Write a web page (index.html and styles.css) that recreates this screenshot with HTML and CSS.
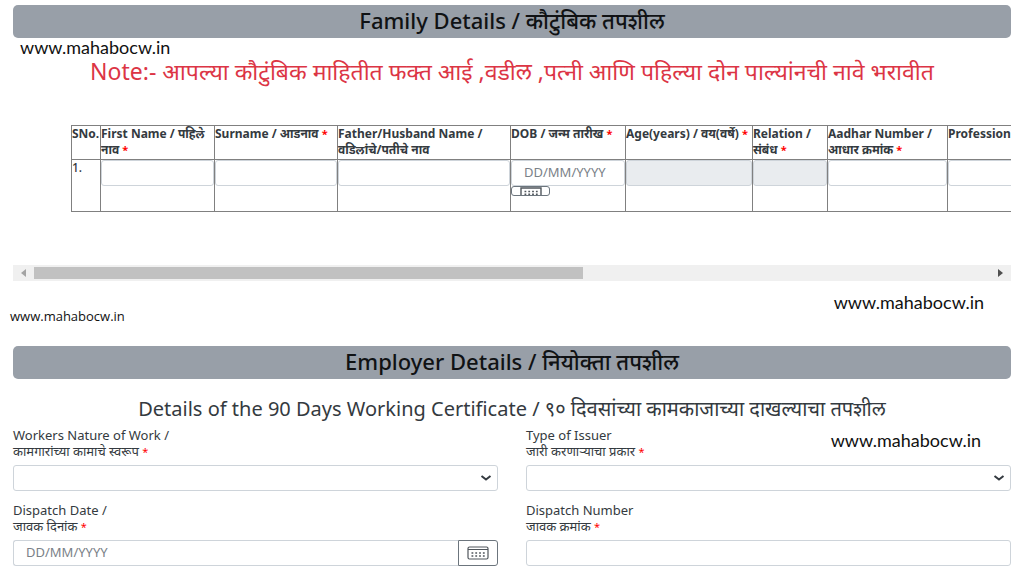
FILE: index.html
```html
<!DOCTYPE html>
<html lang="mr">
<head>
<meta charset="utf-8">
<title>Family and Employer Details</title>
<link rel="stylesheet" href="styles.css">
</head>
<body>
<svg class="defs" aria-hidden="true">
  <symbol id="calendar" viewBox="0 0 22 14">
    <rect x="1" y="1" width="20" height="12" rx="1.5" fill="none" stroke="#50565c" stroke-width="1.2"/>
    <path d="M1 3.5h20" stroke="#50565c" stroke-width="1"/>
    <path d="M4.500 7h13.500M4.500 10h13.500" stroke="#50565c" stroke-width="1.600" stroke-dasharray="1.800 2"/>
  </symbol>
  <symbol id="calendar-cut" viewBox="0 0 22 10">
    <path d="M1 10V1h20v9" fill="none" stroke="#50565c" stroke-width="1.4"/>
    <path d="M4.500 4.500h13.500M4.500 7.200h13.500" stroke="#50565c" stroke-width="1.600" stroke-dasharray="1.800 2"/>
  </symbol>
</svg>
<main class="page">
  <section class="family">
    <h2 class="bar">Family Details / कौटुंबिक तपशील</h2>
    <p class="note">Note:- आपल्या कौटुंबिक माहितीत फक्त आई ,वडील ,पत्नी आणि पहिल्या दोन पाल्यांनची नावे भरावीत</p>
    <div class="table-wrap">
      <table class="members">
        <colgroup>
          <col class="c-no"><col class="c-first"><col class="c-sur"><col class="c-father"><col class="c-dob"><col class="c-age"><col class="c-rel"><col class="c-aadhar"><col class="c-prof">
        </colgroup>
        <thead>
          <tr>
            <th>SNo.</th>
            <th>First Name / पहिले नाव <span class="req">*</span></th>
            <th>Surname / आडनाव <span class="req">*</span></th>
            <th>Father/Husband Name / वडिलांचे/पतीचे नाव</th>
            <th>DOB / जन्म तारीख <span class="req">*</span></th>
            <th>Age(years) / वय(वर्षे) <span class="req">*</span></th>
            <th>Relation /<br>संबंध <span class="req">*</span></th>
            <th>Aadhar Number / आधार क्रमांक <span class="req">*</span></th>
            <th>Profession</th>
          </tr>
        </thead>
        <tbody>
          <tr>
            <td>1.</td>
            <td><input class="cell" aria-label="First Name"></td>
            <td><input class="cell" aria-label="Surname"></td>
            <td><input class="cell" aria-label="Father/Husband Name"></td>
            <td><input class="cell" aria-label="DOB" placeholder="DD/MM/YYYY"><button class="mini" type="button" aria-label="Choose date of birth"><svg class="mini-icon"><use href="#calendar-cut"/></svg></button></td>
            <td><input class="cell" aria-label="Age" disabled></td>
            <td><input class="cell" aria-label="Relation" disabled></td>
            <td><input class="cell" aria-label="Aadhar Number"></td>
            <td><input class="cell" aria-label="Profession"></td>
          </tr>
        </tbody>
      </table>
    </div>
    <div class="scroll">
      <button class="arrow left" type="button" aria-label="Scroll left"></button>
      <div class="track"><div class="thumb"></div></div>
      <button class="arrow right" type="button" aria-label="Scroll right"></button>
    </div>
  </section>
  <section class="employer">
    <h2 class="bar">Employer Details / नियोक्ता तपशील</h2>
    <h3 class="sub">Details of the 90 Days Working Certificate / ९० दिवसांच्या कामकाजाच्या दाखल्याचा तपशील</h3>
    <form class="fields">
      <div class="field">
        <label for="nature">Workers Nature of Work /<br>कामगारांच्या कामाचे स्वरूप <span class="req">*</span></label>
        <div class="select"><select id="nature"><option></option></select><svg class="chev" viewBox="0 0 12 8"><path d="M1.500 2l4.500 3.500L10.500 2" fill="none" stroke="#343a40" stroke-width="2"/></svg></div>
      </div>
      <div class="field">
        <label for="issuer">Type of Issuer<br>जारी करणाऱ्याचा प्रकार <span class="req">*</span></label>
        <div class="select"><select id="issuer"><option></option></select><svg class="chev" viewBox="0 0 12 8"><path d="M1.500 2l4.500 3.500L10.500 2" fill="none" stroke="#343a40" stroke-width="2"/></svg></div>
      </div>
      <div class="field">
        <label for="ddate">Dispatch Date /<br>जावक दिनांक <span class="req">*</span></label>
        <div class="group"><input id="ddate" class="box" placeholder="DD/MM/YYYY"><button class="cal" type="button" aria-label="Choose dispatch date"><svg class="cal-icon"><use href="#calendar"/></svg></button></div>
      </div>
      <div class="field">
        <label for="dnum">Dispatch Number<br>जावक क्रमांक <span class="req">*</span></label>
        <input id="dnum" class="box">
      </div>
    </form>
  </section>
  <span class="mark mark-top">www.mahabocw.in</span>
  <span class="mark mark-mid">www.mahabocw.in</span>
  <span class="mark mark-small">www.mahabocw.in</span>
  <span class="mark mark-low">www.mahabocw.in</span>
</main>
</body>
</html>
```
FILE: styles.css
```css
* { box-sizing: border-box; }
body {
  margin: 0;
  background: #fff;
  color: #343a40;
  font-family: "Noto Sans", "Open Sans", sans-serif;
  font-size: 13px;
  line-height: 16px;
}
input, button, select { font: inherit; color: inherit; margin: 0; }
.defs { position: absolute; width: 0; height: 0; }
.page { position: relative; padding: 5px 13px 0; overflow: hidden; }
.bar {
  margin: 0;
  height: 33px;
  border-radius: 5px;
  background: #989fa8;
  color: #101214;
  font-size: 22px;
  font-weight: 500;
  line-height: 30px;
  text-align: center;
}
.note {
  margin: 18px 0 0;
  color: #dc3545;
  font-size: 23px;
  line-height: 30px;
  text-align: center;
  white-space: nowrap;
}
.table-wrap { margin-top: 39px; padding-left: 58px; overflow: hidden; }
.members { table-layout: fixed; width: 1000px; border-collapse: collapse; }
.c-no { width: 29px; }
.c-first { width: 114px; }
.c-sur { width: 123px; }
.c-father { width: 173px; }
.c-dob { width: 115px; }
.c-age { width: 127px; }
.c-rel { width: 75px; }
.c-aadhar { width: 120px; }
.c-prof { width: 124px; }
.members th, .members td {
  padding: 0;
  border: 1px solid #808080;
  text-align: left;
  vertical-align: top;
}
.members th { height: 34px; font-size: 12px; font-weight: 700; }
.members td { height: 52px; font-size: 12px; font-weight: 500; }
.req { color: #f00; font-size: 11px; line-height: 1; }
.cell {
  display: block;
  width: 100%;
  height: 26px;
  padding: 0 12px 2px;
  border: 1px solid #ced4da;
  border-radius: 3px;
  background: #fff;
  font-size: 13px;
}
.cell:disabled { background: #e9ecef; }
input::placeholder { color: #7a8188; opacity: 1; font-weight: 400; }
.mini {
  display: flex;
  justify-content: center;
  width: 39px;
  height: 10px;
  padding: 0;
  border: 1px solid #6c757d;
  border-radius: 3px;
  background: #fff;
  overflow: hidden;
}
.mini-icon { flex: none; width: 22px; height: 10px; }
.scroll { display: flex; align-items: center; height: 16px; margin-top: 53px; background: #f0f0f0; }
.arrow { display: flex; align-items: center; justify-content: center; width: 21px; height: 16px; padding: 0; border: 0; background: none; }
.arrow::before { content: ""; border: 4px solid transparent; }
.left::before { border-left-width: 0; border-right: 5px solid #a3a3a3; }
.right::before { border-right-width: 0; border-left: 5px solid #505050; }
.track { flex: 1; }
.thumb { width: 57.4%; height: 12px; background: #c1c1c1; }
.employer { margin-top: 65px; }
.sub { margin: 15px 0 3px; font-size: 20px; font-weight: 400; line-height: 30px; text-align: center; white-space: nowrap; }
.fields { display: grid; grid-template-columns: 1fr 1fr; gap: 11px 28px; }
.field { display: flex; flex-direction: column; gap: 6px; min-width: 0; }
.box, .select select {
  width: 100%;
  height: 26px;
  padding: 0 12px 2px;
  border: 1px solid #ced4da;
  border-radius: 3px;
  background: #fff;
}
.select { display: grid; align-items: center; }
.select select { grid-area: 1 / 1; appearance: none; }
.chev { grid-area: 1 / 1; justify-self: end; width: 12px; height: 8px; margin-right: 6px; pointer-events: none; }
.group { display: flex; }
.group .box { flex: 1; border-radius: 3px 0 0 3px; border-right: 0; }
.cal { display: flex; align-items: center; justify-content: center; width: 40px; height: 26px; padding: 0; border: 1px solid #6c757d; border-radius: 0 3px 3px 0; background: #fff; }
.cal-icon { width: 22px; height: 14px; }
.mark { position: absolute; color: #111; font-family: Lato, sans-serif; font-size: 18px; line-height: 24px; }
.mark-top { left: 20px; top: 35px; }
.mark-mid { right: 40px; top: 290px; }
.mark-small { left: 10px; top: 304px; font-family: "Open Sans", sans-serif; font-size: 13px; }
.mark-low { right: 43px; top: 428px; }
```
